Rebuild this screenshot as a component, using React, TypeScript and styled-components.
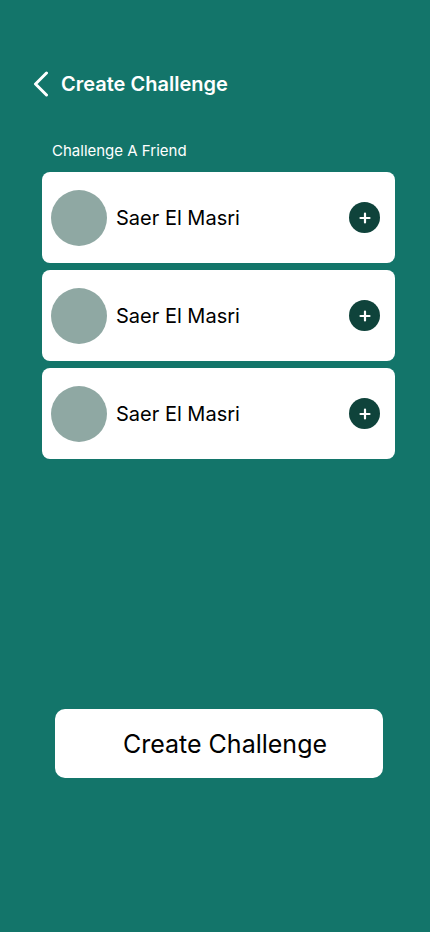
import styled, { createGlobalStyle } from "styled-components";

const GlobalStyle = createGlobalStyle`
  html, body {
    margin: 0;
    padding: 0;
    background: #13756a;
  }
  * {
    box-sizing: border-box;
  }
`;

const Screen = styled.div`
  width: 430px;
  height: 932px;
  background: #13756a;
  font-family: Inter, "Noto Sans", sans-serif;
  display: flex;
  flex-direction: column;
  padding-top: 68px;
`;

const Header = styled.div`
  display: flex;
  align-items: center;
  gap: 12px;
  padding-left: 33px;
  height: 32px;
`;

const BackButton = styled.button`
  border: none;
  background: none;
  padding: 0;
  width: 16px;
  height: 26px;
  display: flex;
  cursor: pointer;
`;

const Title = styled.h1`
  margin: 0;
  color: #fff;
  font-size: 20px;
  font-weight: 600;
`;

const SectionLabel = styled.div`
  color: #fff;
  font-size: 15px;
  font-weight: 400;
  margin: 41px 0 0 52px;
`;

const List = styled.div`
  display: flex;
  flex-direction: column;
  gap: 7px;
  margin: 12px 35px 0 42px;
`;

const Card = styled.div`
  height: 91px;
  background: #fff;
  border-radius: 8px;
  display: flex;
  align-items: center;
  padding: 0 15px 0 9px;
`;

const Avatar = styled.div`
  width: 56px;
  height: 56px;
  border-radius: 50%;
  background: #8fa8a3;
  flex-shrink: 0;
`;

const Name = styled.div`
  flex: 1;
  margin-left: 9px;
  font-size: 20px;
  color: #000;
`;

const AddButton = styled.button`
  width: 31px;
  height: 31px;
  border-radius: 50%;
  border: none;
  background: #0f433b;
  display: flex;
  align-items: center;
  justify-content: center;
  padding: 0;
  cursor: pointer;
`;

const Footer = styled.div`
  display: flex;
  margin-top: 250px;
  padding-left: 55px;
`;

const CreateButton = styled.button`
  width: 328px;
  height: 69px;
  border: none;
  border-radius: 10px;
  background: #fff;
  color: #000;
  font-family: Inter, "Noto Sans", sans-serif;
  font-size: 25px;
  padding: 0 0 0 12px;
  cursor: pointer;
`;

const friends = ["Saer El Masri", "Saer El Masri", "Saer El Masri"];

const App = () => {
  return (
    <>
      <GlobalStyle />
      <Screen>
        <Header>
          <BackButton aria-label="Back">
            <svg width="16" height="26" viewBox="0 0 16 26" fill="none">
              <path
                d="M13.5 2 L2.5 13 L13.5 24"
                stroke="#fff"
                strokeWidth="3"
                strokeLinecap="round"
                strokeLinejoin="round"
              />
            </svg>
          </BackButton>
          <Title>Create Challenge</Title>
        </Header>
        <SectionLabel>Challenge A Friend</SectionLabel>
        <List>
          {friends.map((name, i) => (
            <Card key={i}>
              <Avatar />
              <Name>{name}</Name>
              <AddButton aria-label="Add">
                <svg width="12" height="12" viewBox="0 0 12 12">
                  <path
                    d="M6 1.5 V10.5 M1.5 6 H10.5"
                    stroke="#fff"
                    strokeWidth="2.2"
                    strokeLinecap="round"
                  />
                </svg>
              </AddButton>
            </Card>
          ))}
        </List>
        <Footer>
          <CreateButton>Create Challenge</CreateButton>
        </Footer>
      </Screen>
    </>
  );
};

export default App;
